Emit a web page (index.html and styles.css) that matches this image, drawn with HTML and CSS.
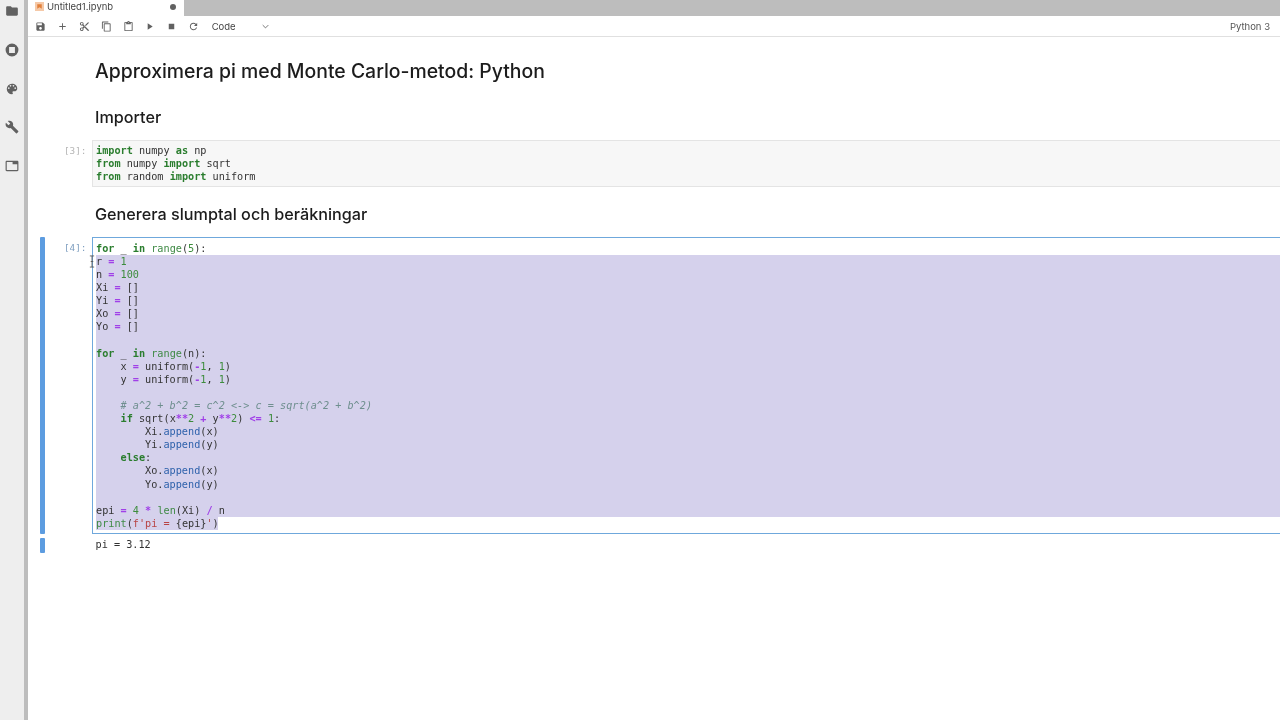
FILE: index.html
```html
<!DOCTYPE html>
<html lang="sv">
<head>
    <meta charset="UTF-8">
    <title>Untitled1.ipynb</title>
    <link rel="stylesheet" href="styles.css">
</head>
<body>
    <div class="sidebar">
        <svg class="side-icon" viewBox="0 0 24 24"><path d="M10 4H4c-1.1 0-1.99.9-1.99 2L2 18c0 1.1.9 2 2 2h16c1.1 0 2-.9 2-2V8c0-1.1-.9-2-2-2h-8l-2-2z"/></svg>
        <svg class="side-icon" viewBox="0 0 24 24"><path fill-rule="evenodd" d="M12 1a11 11 0 1 0 0 22 11 11 0 0 0 0-22zM7 7h10v10H7z"/></svg>
        <svg class="side-icon" viewBox="0 0 24 24"><path d="M12 3a9 9 0 0 0 0 18c.83 0 1.5-.67 1.5-1.5 0-.39-.15-.74-.39-1.01-.23-.26-.38-.61-.38-.99 0-.83.67-1.5 1.5-1.5H16c2.76 0 5-2.24 5-5 0-4.42-4.03-8-9-8zm-5.5 9c-.83 0-1.5-.67-1.5-1.5S5.67 9 6.5 9 8 9.67 8 10.5 7.33 12 6.5 12zm3-4C8.67 8 8 7.33 8 6.5S8.67 5 9.5 5s1.5.67 1.5 1.5S10.33 8 9.5 8zm5 0c-.83 0-1.5-.67-1.5-1.5S13.67 5 14.5 5s1.5.67 1.5 1.5S15.33 8 14.5 8zm3 4c-.83 0-1.5-.67-1.5-1.5S16.67 9 17.5 9s1.5.67 1.5 1.5-.67 1.5-1.5 1.5z"/></svg>
        <svg class="side-icon" viewBox="0 0 24 24"><path d="M22.7 19l-9.1-9.1c.9-2.3.4-5-1.5-6.9-2-2-5-2.4-7.4-1.3L9 6 6 9 1.6 4.7C.4 7.1.9 10.1 2.9 12.1c1.9 1.9 4.6 2.4 6.9 1.5l9.1 9.1c.4.4 1 .4 1.4 0l2.3-2.3c.5-.4.5-1.1.1-1.4z"/></svg>
        <svg class="side-icon" viewBox="0 0 24 24"><path d="M21 3H3c-1.1 0-2 .9-2 2v14c0 1.1.9 2 2 2h18c1.1 0 2-.9 2-2V5c0-1.1-.9-2-2-2zm0 16H3V5h10v4h8v10z"/></svg>
    </div>
    <div class="main">
        <div class="tabbar">
            <div class="tab">
                <svg class="tab-icon" viewBox="0 0 12 12"><rect width="12" height="12" fill="#f5c9a8"/><path d="M3 3h6v6L6 7 3 9z" fill="#e2803a"/></svg>
                <span class="tab-name">Untitled1.ipynb</span>
                <span class="tab-dot"></span>
            </div>
        </div>
        <div class="toolbar">
            <span class="tool"><svg viewBox="0 0 24 24"><path d="M17 3H5c-1.11 0-2 .9-2 2v14c0 1.1.89 2 2 2h14c1.1 0 2-.9 2-2V7l-4-4zm-5 16c-1.66 0-3-1.34-3-3s1.34-3 3-3 3 1.34 3 3-1.34 3-3 3zm3-10H5V5h10v4z"/></svg></span>
            <span class="tool"><svg viewBox="0 0 24 24"><path d="M19 13h-6v6h-2v-6H5v-2h6V5h2v6h6v2z"/></svg></span>
            <span class="tool"><svg viewBox="0 0 24 24"><path d="M9.64 7.64c.23-.5.36-1.05.36-1.64 0-2.21-1.79-4-4-4S2 3.79 2 6s1.79 4 4 4c.59 0 1.14-.13 1.64-.36L10 12l-2.36 2.36C7.14 14.13 6.59 14 6 14c-2.21 0-4 1.79-4 4s1.79 4 4 4 4-1.79 4-4c0-.59-.13-1.14-.36-1.64L12 14l7 7h3v-1L9.64 7.64zM6 8c-1.1 0-2-.89-2-2s.9-2 2-2 2 .89 2 2-.9 2-2 2zm0 12c-1.1 0-2-.89-2-2s.9-2 2-2 2 .89 2 2-.9 2-2 2zm6-7.5c-.28 0-.5-.22-.5-.5s.22-.5.5-.5.5.22.5.5-.22.5-.5.5zM19 3l-6 6 2 2 7-7V3z"/></svg></span>
            <span class="tool"><svg viewBox="0 0 24 24"><path d="M16 1H4c-1.1 0-2 .9-2 2v14h2V3h12V1zm3 4H8c-1.1 0-2 .9-2 2v14c0 1.1.9 2 2 2h11c1.1 0 2-.9 2-2V7c0-1.1-.9-2-2-2zm0 16H8V7h11v14z"/></svg></span>
            <span class="tool"><svg viewBox="0 0 24 24"><path d="M19 2h-4.18C14.4.84 13.3 0 12 0c-1.3 0-2.4.84-2.82 2H5c-1.1 0-2 .9-2 2v16c0 1.1.9 2 2 2h14c1.1 0 2-.9 2-2V4c0-1.1-.9-2-2-2zm-7 0c.55 0 1 .45 1 1s-.45 1-1 1-1-.45-1-1 .45-1 1-1zm7 18H5V4h2v3h10V4h2v16z"/></svg></span>
            <span class="tool"><svg viewBox="0 0 24 24"><path d="M8 5v14l11-7z"/></svg></span>
            <span class="tool"><svg viewBox="0 0 24 24"><path d="M6 6h12v12H6z"/></svg></span>
            <span class="tool"><svg viewBox="0 0 24 24"><path d="M17.65 6.35C16.2 4.9 14.21 4 12 4c-4.42 0-7.99 3.58-7.99 8s3.57 8 7.99 8c3.73 0 6.84-2.55 7.73-6h-2.08c-.82 2.33-3.04 4-5.65 4-3.31 0-6-2.69-6-6s2.69-6 6-6c1.66 0 3.14.69 4.22 1.78L13 11h7V4l-2.35 2.35z"/></svg></span>
            <span class="cell-type">Code</span>
            <svg class="chevron" viewBox="0 0 10 6"><path d="M1 1l4 4 4-4" fill="none" stroke="#616161" stroke-width="1.2"/></svg>
            <span class="kernel">Python 3</span>
        </div>
        <div class="notebook">
            <h1 class="heading-1">Approximera pi med Monte Carlo-metod: Python</h1>
            <h2 class="heading-2">Importer</h2>

            <div class="cell">
                <div class="collapser"></div>
                <div class="prompt">[3]:</div>
                <div class="input input-plain">
                    <div class="line"><b>import</b> numpy <b>as</b> np</div>
                    <div class="line"><b>from</b> numpy <b>import</b> sqrt</div>
                    <div class="line"><b>from</b> random <b>import</b> uniform</div>
                </div>
            </div>

            <h2 class="heading-2 heading-gen">Generera slumptal och beräkningar</h2>

            <div class="cell">
                <div class="collapser collapser-on"></div>
                <div class="prompt prompt-active">[4]:</div>
                <div class="input input-active">
                    <div class="line"><b>for</b> _ <b>in</b> <i class="fn">range</i>(<u>5</u>):</div>
                    <div class="line sel">r <s>=</s> <u>1</u></div>
                    <div class="line sel">n <s>=</s> <u>100</u></div>
                    <div class="line sel">Xi <s>=</s> []</div>
                    <div class="line sel">Yi <s>=</s> []</div>
                    <div class="line sel">Xo <s>=</s> []</div>
                    <div class="line sel">Yo <s>=</s> []</div>
                    <div class="line sel"></div>
                    <div class="line sel"><b>for</b> _ <b>in</b> <i class="fn">range</i>(n):</div>
                    <div class="line sel">    x <s>=</s> uniform(<s>-</s><u>1</u>, <u>1</u>)</div>
                    <div class="line sel">    y <s>=</s> uniform(<s>-</s><u>1</u>, <u>1</u>)</div>
                    <div class="line sel"></div>
                    <div class="line sel">    <em># a^2 + b^2 = c^2 &lt;-&gt; c = sqrt(a^2 + b^2)</em></div>
                    <div class="line sel">    <b>if</b> sqrt(x<s>**</s><u>2</u> <s>+</s> y<s>**</s><u>2</u>) <s>&lt;=</s> <u>1</u>:</div>
                    <div class="line sel">        Xi.<i class="prop">append</i>(x)</div>
                    <div class="line sel">        Yi.<i class="prop">append</i>(y)</div>
                    <div class="line sel">    <b>else</b>:</div>
                    <div class="line sel">        Xo.<i class="prop">append</i>(x)</div>
                    <div class="line sel">        Yo.<i class="prop">append</i>(y)</div>
                    <div class="line sel"></div>
                    <div class="line sel">epi <s>=</s> <u>4</u> <s>*</s> <i class="fn">len</i>(Xi) <s>/</s> n</div>
                    <div class="line sel sel-end"><i class="fn">print</i>(<i class="str">f'pi = </i>{epi}<i class="str">'</i>)</div>
                    <svg class="ibeam" viewBox="0 0 7 14"><path d="M1 .5h5M3.500 .5v13M1 13.500h5M2 7h3" fill="none" stroke="#555" stroke-width="1"/></svg>
                </div>
            </div>

            <div class="cell">
                <div class="collapser collapser-on collapser-out"></div>
                <div class="prompt"></div>
                <div class="output">pi = 3.12</div>
            </div>
        </div>
    </div>
</body>
</html>
```

FILE: styles.css
```css
html, body {
    height: 100%;
}
body {
    margin: 0;
    display: flex;
    height: 720px;
    overflow: hidden;
    background-color: #fff;
    font-family: Inter, "Liberation Sans", sans-serif;
    color: #222;
    filter: blur(0.35px); /* the reference is a soft video frame */
}
.sidebar {
    width: 24px;
    flex: none;
    display: flex;
    flex-direction: column;
    align-items: center;
    gap: 24.800px;
    padding-top: 4px;
    background-color: #eeeeee;
    border-right: 4px solid #bdbdbd;
}
.side-icon {
    width: 14px;
    height: 14px;
    fill: #616161;
}
.main {
    flex: 1;
    min-width: 0;
    display: flex;
    flex-direction: column;
}
.tabbar {
    height: 16px;
    flex: none;
    background-color: #bdbdbd;
    display: flex;
}
.tab {
    width: 156px;
    background-color: #fff;
    display: flex;
    align-items: center;
    padding-left: 7px;
    padding-right: 8px;
    padding-bottom: 3px;
    box-sizing: border-box;
}
.tab-icon {
    width: 9px;
    height: 9px;
    margin-right: 3px;
}
.tab-name {
    font-size: 9.500px;
    color: #444;
    flex: 1;
}
.tab-dot {
    width: 6px;
    height: 6px;
    border-radius: 50%;
    background-color: #616161;
}
.toolbar {
    height: 21px;
    flex: none;
    box-sizing: border-box;
    border-bottom: 1px solid #e0e0e0;
    display: flex;
    align-items: center;
    padding-left: 1.500px;
    padding-right: 10px;
}
.tool {
    width: 21.900px;
    display: flex;
    justify-content: center;
}
.tool svg {
    width: 11px;
    height: 11px;
    fill: #616161;
}
.cell-type {
    font-size: 9.500px;
    color: #444;
    margin-left: 7px;
    width: 50px;
}
.chevron {
    width: 7px;
    height: 5px;
}
.kernel {
    margin-left: auto;
    font-size: 9.500px;
    color: #555;
}
.notebook {
    flex: 1;
    padding-top: 22px;
}
.heading-1 {
    margin: 0 0 0 67px;
    font-size: 19.400px;
    line-height: 24px;
    font-weight: 500;
    color: #1c1c1c;
}
.heading-2 {
    margin: 24px 0 13px 67px;
    font-size: 16.200px;
    line-height: 20px;
    font-weight: 500;
    color: #1c1c1c;
}
.heading-gen {
    margin-top: 17px;
    margin-bottom: 13px;
}
.cell {
    display: flex;
}
.collapser {
    width: 5px;
    margin-left: 12px;
    flex: none;
}
.collapser-on {
    background-color: #5c9ce0;
    border-radius: 1px;
}
.collapser-out {
    height: 15px;
    margin-top: 4px;
}
.prompt {
    width: 41.500px;
    flex: none;
    padding-top: 4px;
    text-align: right;
    font-family: "DejaVu Sans Mono", monospace;
    font-size: 9.400px;
    line-height: 13.100px;
    color: #b5b5b5;
}
.prompt-active {
    padding-top: 4px;
    color: #7f9fc0;
}
.input {
    flex: 1;
    margin-left: 5.500px;
    font-family: "DejaVu Sans Mono", monospace;
    font-size: 10.200px;
    color: #333;
    position: relative;
}
.input-plain {
    background-color: #f7f7f7;
    border: 1px solid #e4e4e4;
    border-right: 0;
    padding: 3px 0 3px 3px;
}
.input-active {
    background-color: #fff;
    border: 1px solid #6fa8dc;
    border-right: 0;
    padding: 3.600px 0 3.400px 3px;
}
.line {
    height: 13.100px;
    line-height: 13.100px;
    white-space: pre;
}
.sel {
    background-color: #d5d1ec;
}
.sel-end {
    width: 122px;
}
.line b {
    color: #2a7d2e;
    font-weight: 700;
}
.line s {
    color: #a040e8;
    font-weight: 700;
    text-decoration: none;
}
.line u {
    color: #3c8c3c;
    text-decoration: none;
}
.line em {
    color: #6f8f8f;
    font-style: italic;
}
.fn {
    color: #3f8a45;
    font-style: normal;
}
.prop {
    color: #2f62ac;
    font-style: normal;
}
.str {
    color: #b84444;
    font-style: normal;
}
.ibeam {
    position: absolute;
    left: -4px;
    top: 17px;
    width: 6px;
    height: 13px;
}
.output {
    margin-left: 9px;
    padding-top: 4px;
    height: 22px;
    box-sizing: border-box;
    font-family: "DejaVu Sans Mono", monospace;
    font-size: 10.200px;
    line-height: 13.100px;
    color: #333;
}
```
